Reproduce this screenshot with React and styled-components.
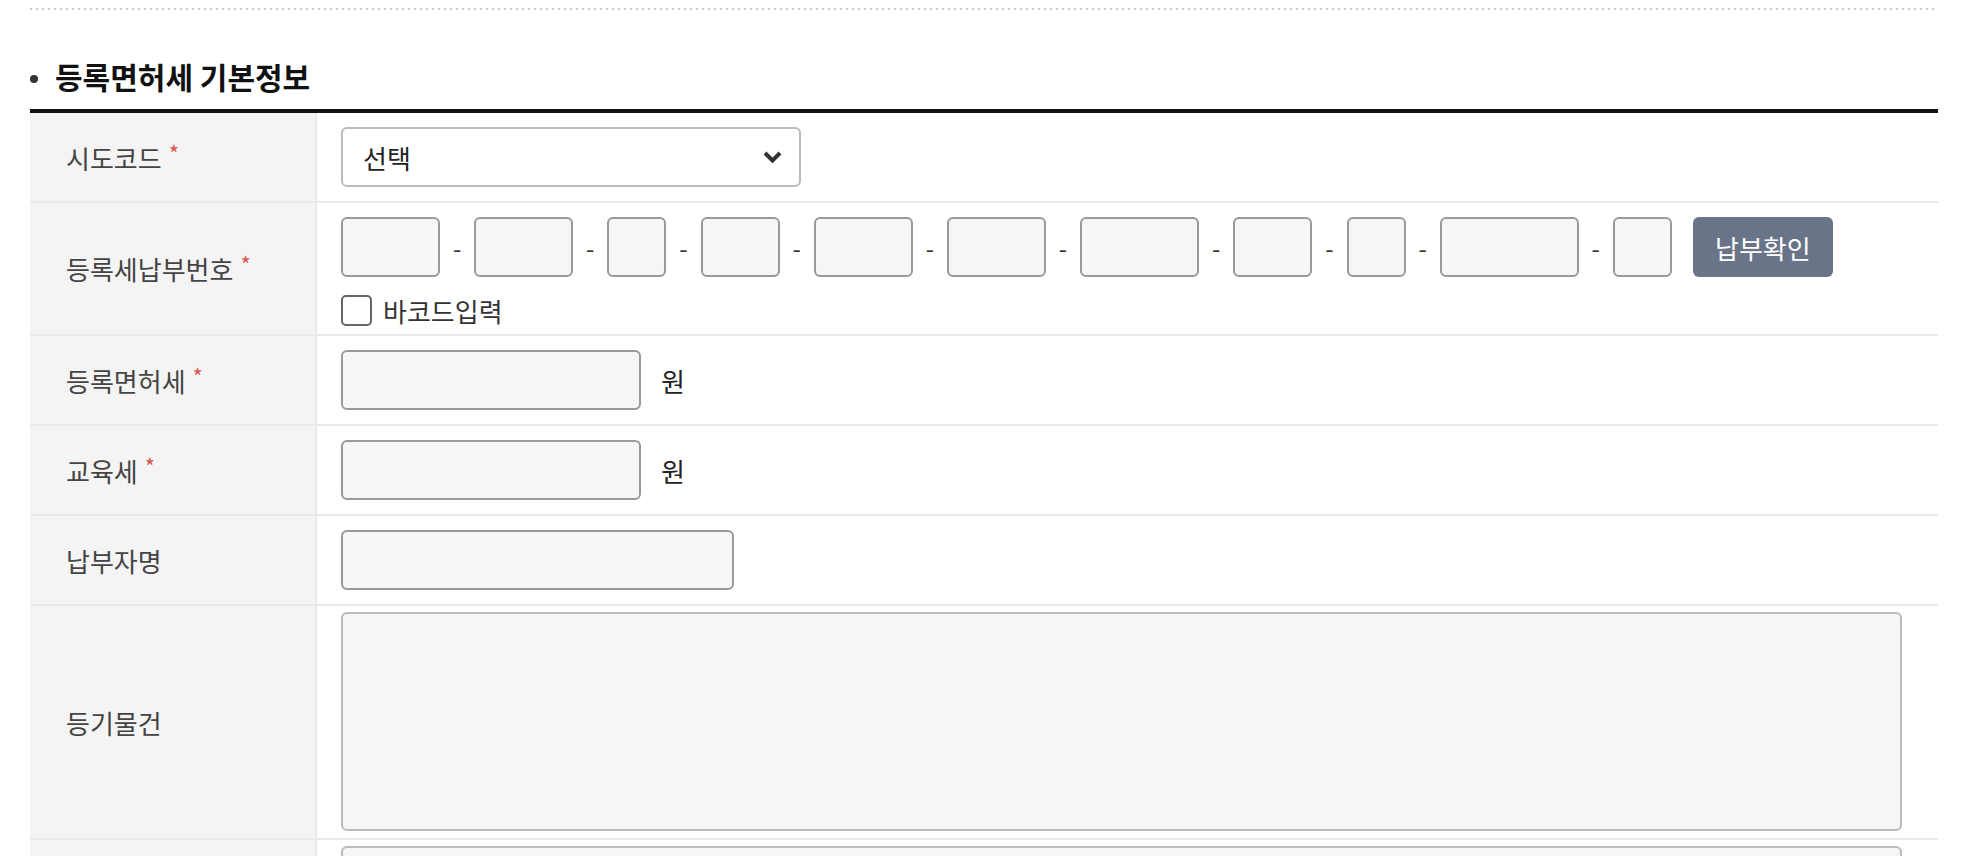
import React from 'react';
import styled, { createGlobalStyle } from 'styled-components';

const GlobalStyle = createGlobalStyle`
  * { box-sizing: border-box; }
  body {
    margin: 0;
    background: #fff;
    font-family: "Noto Sans CJK KR", "Noto Sans", sans-serif;
    color: #222;
  }
`;

const Page = styled.div`
  padding: 8px 42px 0 30px;
`;

const DottedRule = styled.div`
  height: 2px;
  background-image: linear-gradient(to right, #cccccc 2px, transparent 2px);
  background-size: 6px 2px;
`;

const Title = styled.h2`
  display: flex;
  align-items: center;
  gap: 17px;
  margin: 44px 0 10px;
  height: 45px;
  line-height: 45px;
  font-size: 30px;
  font-weight: 700;
  color: #111;
`;

const Bullet = styled.span`
  width: 8px;
  height: 8px;
  border-radius: 50%;
  background: #333;
  flex-shrink: 0;
  position: relative;
  top: 2px;
`;

const Table = styled.div`
  border-top: 4px solid #111;
`;

const Row = styled.div`
  display: grid;
  grid-template-columns: 287px 1fr;
  border-bottom: 2px solid #e9e9e9;
`;

const Th = styled.div`
  display: flex;
  align-items: center;
  padding-left: 36px;
  background: #f4f4f4;
  border-right: 2px solid #eaeaea;
  font-size: 26px;
  line-height: 1.5;
  color: #444;
`;

const LabelText = styled.span`
  display: inline-block;
`;

const Req = styled.span`
  display: inline-block;
  margin-left: 7px;
  font-size: 22px;
  line-height: 1;
  vertical-align: top;
  position: relative;
  top: 3px;
  color: #d9534f;
`;

const Td = styled.div`
  padding: ${p => p.$pad || '14px 24px'};
  display: flex;
  flex-direction: column;
`;

const Line = styled.div`
  display: flex;
  align-items: center;
`;

const SelectWrap = styled.div`
  position: relative;
  width: 460px;
  height: 60px;
`;

const Select = styled.select`
  appearance: none;
  width: 100%;
  height: 100%;
  border: 2px solid #bbb;
  border-radius: 6px;
  background: #fff;
  padding: 0 0 0 20px;
  font-family: inherit;
  font-size: 26px;
  color: #222;
`;

const Chevron = styled.svg`
  position: absolute;
  right: 19px;
  top: 50%;
  transform: translateY(-50%);
  pointer-events: none;
`;

const Input = styled.input`
  width: ${p => p.$w}px;
  height: 60px;
  flex-shrink: 0;
  margin: 0;
  border: 2px solid #999;
  border-radius: 6px;
  background: #f6f6f6;
  font-family: inherit;
  font-size: 22px;
  padding: 0 10px;
`;

const Sep = styled.span`
  width: 34.2px;
  flex-shrink: 0;
  text-align: center;
  font-size: 24px;
  color: #333;
`;

const Button = styled.button`
  margin-left: 21px;
  width: 140px;
  height: 60px;
  flex-shrink: 0;
  border: none;
  border-radius: 6px;
  background: #6a7489;
  color: #fff;
  font-family: inherit;
  font-size: 26px;
  padding: 0;
`;

const CheckRow = styled.label`
  display: flex;
  align-items: center;
  gap: 11px;
  margin-top: 15px;
  height: 36px;
  font-size: 26px;
  color: #333;
`;

const Check = styled.input`
  appearance: none;
  width: 31px;
  height: 31px;
  margin: 0;
  border: 2px solid #666;
  border-radius: 5px;
  background: #fff;
`;

const Unit = styled.span`
  margin-left: 20px;
  font-size: 26px;
  color: #222;
`;

const TextArea = styled.textarea`
  display: block;
  width: calc(100% - 12px);
  height: 219px;
  border: 2px solid #bbb;
  border-radius: 6px;
  background: #f6f6f6;
  resize: none;
  font-family: inherit;
  font-size: 22px;
`;

const Label = ({ children, req }) => (
  <Th>
    <LabelText>
      {children}
      {req && <Req>*</Req>}
    </LabelText>
  </Th>
);

const numberWidths = [99, 99, 59, 79, 99, 99, 119, 79, 59, 139, 59];

export default function App() {
  return (
    <>
      <GlobalStyle />
      <Page>
        <DottedRule />
        <Title>
          <Bullet />
          등록면허세 기본정보
        </Title>
        <Table>
          <Row>
            <Label req>시도코드</Label>
            <Td>
              <SelectWrap>
                <Select defaultValue="">
                  <option value="">선택</option>
                </Select>
                <Chevron width="19" height="12" viewBox="0 0 19 12">
                  <polyline points="2,2 9.5,9.5 17,2" fill="none" stroke="#333" strokeWidth="4" />
                </Chevron>
              </SelectWrap>
            </Td>
          </Row>
          <Row>
            <Label req>등록세납부번호</Label>
            <Td $pad="14px 24px 6px">
              <Line>
                {numberWidths.map((w, i) => (
                  <React.Fragment key={i}>
                    {i > 0 && <Sep>-</Sep>}
                    <Input $w={w} type="text" />
                  </React.Fragment>
                ))}
                <Button type="button">납부확인</Button>
              </Line>
              <CheckRow>
                <Check type="checkbox" />
                바코드입력
              </CheckRow>
            </Td>
          </Row>
          <Row>
            <Label req>등록면허세</Label>
            <Td>
              <Line>
                <Input $w={300} type="text" />
                <Unit>원</Unit>
              </Line>
            </Td>
          </Row>
          <Row>
            <Label req>교육세</Label>
            <Td>
              <Line>
                <Input $w={300} type="text" />
                <Unit>원</Unit>
              </Line>
            </Td>
          </Row>
          <Row>
            <Label>납부자명</Label>
            <Td>
              <Line>
                <Input $w={393} type="text" />
              </Line>
            </Td>
          </Row>
          <Row>
            <Label>등기물건</Label>
            <Td $pad="6px 24px 7px">
              <TextArea />
            </Td>
          </Row>
          <Row>
            <Label />
            <Td $pad="6px 24px 7px">
              <TextArea />
            </Td>
          </Row>
        </Table>
      </Page>
    </>
  );
}
